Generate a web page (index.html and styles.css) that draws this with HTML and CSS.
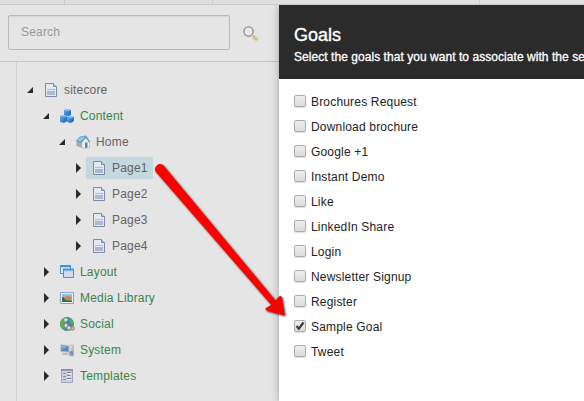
FILE: index.html
```html
<!DOCTYPE html>
<html lang="en">
<head>
<meta charset="utf-8">
<title>Goals</title>
<link rel="stylesheet" href="styles.css">
</head>
<body>
<svg class="defs" width="0" height="0" aria-hidden="true">
  <defs>
    <linearGradient id="blue" x1="0" y1="0" x2="1" y2="1"><stop offset="0" stop-color="#6db3ec"/><stop offset="1" stop-color="#1457b4"/></linearGradient>
    <linearGradient id="grey" x1="0" y1="0" x2="1" y2="1"><stop offset="0" stop-color="#eee"/><stop offset="1" stop-color="#999"/></linearGradient>
    <symbol id="open" viewBox="0 0 8 8"><path d="M7 1v6H1z" fill="#2b2b2b"/></symbol>
    <symbol id="closed" viewBox="0 0 8 10"><path d="M2 0v10l5-5z" fill="#2b2b2b"/></symbol>
    <symbol id="doc" viewBox="0 0 16 16">
      <path d="M2.500 1.500h8l3 3v10h-11z" fill="#e4e8f1" stroke="#7d8aa9"/><path d="M10.500 1.500v3h3" fill="#cbd3e3" stroke="#7d8aa9"/>
      <path d="M4 7.500h8" stroke="#b3bdd4"/><path d="M4 9h8v4H4z" fill="#acb7d2"/>
    </symbol>
    <symbol id="cubes" viewBox="0 0 16 16">
      <path d="M5 2l3-1 4 1v5l-3 1-4-1z" fill="url(#blue)"/><path d="M5 2l4 1 3-1-4-1z" fill="#8bc8f5"/>
      <path d="M1 8l3-1 4 1v5l-3 2-4-1z" fill="url(#blue)"/><path d="M1 8l4 1 3-1-4-1z" fill="#8bc8f5"/>
      <path d="M8 9l3-1 4 1v4l-3 2-4-1z" fill="url(#blue)"/><path d="M8 9l4 1 3-1-4-1z" fill="#8bc8f5"/>
    </symbol>
    <symbol id="house" viewBox="0 0 16 16">
      <path d="M1.500 7l4-2 2 5v4l-6-2z" fill="#a8abad"/><path d="M6.500 8L11 3.500 14.500 8v5.500L9 14.500l-2-1z" fill="#efefed" stroke="#aaa" stroke-width=".6"/>
      <path d="M.8 7L5 2.500l6-1L15.300 8l-1.300.3-3.200-4.300L6.500 9z" fill="#6497bd"/><path d="M2 6.600l3.500-3.500 5-.8L6 7.600z" fill="#93c5e2"/>
      <path d="M10 8.500h2.500v5l-2.500.4z" fill="#4c87bb"/>
    </symbol>
    <symbol id="windows" viewBox="0 0 16 16">
      <path d="M1.500 1.500h10v8h-10z" fill="#e4edf5" stroke="#3c96d8"/><path d="M1 2h11" stroke="#3c96d8" stroke-width="2"/><path d="M2 3.500h9" stroke="#b9daf2"/>
      <path d="M4.500 5.500h10v8h-10z" fill="#d2daec" stroke="#3c96d8"/><path d="M4 5.500h11" stroke="#3c96d8" stroke-width="2"/><path d="M5 7.500h9" stroke="#b9daf2"/>
    </symbol>
    <symbol id="photo" viewBox="0 0 16 16">
      <path d="M1.500 2.500h13v11h-13z" fill="#e9eef4" stroke="#8ea5c5"/><path d="M3 4h10v4H3z" fill="#92bee0"/><path d="M3 7h10v5H3z" fill="#8fae6a"/>
      <path d="M3 7q2 0 3 2t3 1l4 1v1H3z" fill="#39694a"/><ellipse cx="9" cy="7.600" rx="3" ry="1.700" fill="#e77b45"/>
    </symbol>
    <symbol id="globe" viewBox="0 0 16 16">
      <circle cx="8" cy="8" r="7" fill="#3e85c2"/><path d="M3 3l4-2 2 3-3 3-2 1 2 3-1 3-3-3-1-5z" fill="#69a943"/><path d="M10 2l4 3 1 4-3-1-2-3z" fill="#61a44b"/>
      <path d="M5 3q3-2 4 1L6 6z" fill="#c9e7e9"/><g fill="#ddd" stroke="#938e7d" stroke-width="1.100"><circle cx="7" cy="9.500" r="2"/><circle cx="10" cy="12" r="2"/><circle cx="13.500" cy="12.500" r="1.700" fill="#e5bd55"/></g>
    </symbol>
    <symbol id="computer" viewBox="0 0 16 16">
      <path d="M10 3h4.500v11H10z" fill="url(#grey)" stroke="#aaa" stroke-width=".5"/><path d="M1 2l9.500 1v8L1 10z" fill="#c6cbd2"/><path d="M2 3.200l7.500.8v5.800L2 9z" fill="#5c86b7"/>
      <path d="M2 3.200l7.500.8L2 8z" fill="#86a8cd"/><path d="M4 11h4l1 2-6-.5z" fill="#b5b8bc"/><circle cx="12.500" cy="11" r="2" fill="#7893b7"/>
    </symbol>
    <symbol id="form" viewBox="0 0 16 16">
      <path d="M2.500 1.500h11v13h-11z" fill="#cdcfdd" stroke="#a1a4b8"/><path d="M2 2h12" stroke="#84879f" stroke-width="1.500"/>
      <path d="M4 5.500h3M4 8.500h3M4 11.500h3" stroke="#8b8fa8"/><path d="M8 4.500h4M8 7.500h3M8 10.500h4" stroke="#777c98"/><path d="M8 5.500h4M8 8.500h3M8 11.500h4" stroke="#eef0f8"/>
    </symbol>
  </defs>
</svg>
<div class="screen">
  <div class="strip"><i class="cell first"></i><i class="cell second"></i><i class="cell third"></i></div>
  <div class="main">
    <aside class="sidebar">
      <div class="search">
        <div class="field">Search</div>
        <svg class="glass" viewBox="0 0 16 16"><path d="M9.800 9.800l4.400 4.400" stroke="#d9bd82" stroke-width="3.200"/><circle cx="5.500" cy="5.500" r="4.600" fill="#e9e9ea" stroke="#8c8c8c" stroke-width="1.300"/></svg>
      </div>
      <div class="tree">
        <div class="node l0"><svg class="tw"><use href="#open"/></svg><span class="item"><svg><use href="#doc"/></svg><b>sitecore</b></span></div>
        <div class="node l1 green"><svg class="tw"><use href="#open"/></svg><span class="item"><svg><use href="#cubes"/></svg><b>Content</b></span></div>
        <div class="node l2"><svg class="tw"><use href="#open"/></svg><span class="item"><svg><use href="#house"/></svg><b>Home</b></span></div>
        <div class="node l3"><svg class="tw"><use href="#closed"/></svg><span class="item selected"><svg><use href="#doc"/></svg><b>Page1</b></span></div>
        <div class="node l3"><svg class="tw"><use href="#closed"/></svg><span class="item"><svg><use href="#doc"/></svg><b>Page2</b></span></div>
        <div class="node l3"><svg class="tw"><use href="#closed"/></svg><span class="item"><svg><use href="#doc"/></svg><b>Page3</b></span></div>
        <div class="node l3"><svg class="tw"><use href="#closed"/></svg><span class="item"><svg><use href="#doc"/></svg><b>Page4</b></span></div>
        <div class="node l1 green"><svg class="tw"><use href="#closed"/></svg><span class="item"><svg><use href="#windows"/></svg><b>Layout</b></span></div>
        <div class="node l1 green"><svg class="tw"><use href="#closed"/></svg><span class="item"><svg><use href="#photo"/></svg><b>Media Library</b></span></div>
        <div class="node l1 green"><svg class="tw"><use href="#closed"/></svg><span class="item"><svg><use href="#globe"/></svg><b>Social</b></span></div>
        <div class="node l1 green"><svg class="tw"><use href="#closed"/></svg><span class="item"><svg><use href="#computer"/></svg><b>System</b></span></div>
        <div class="node l1 green"><svg class="tw"><use href="#closed"/></svg><span class="item"><svg><use href="#form"/></svg><b>Templates</b></span></div>
      </div>
    </aside>
    <section class="dialog">
      <header><h1>Goals</h1><p>Select the goals that you want to associate with the se</p></header>
      <div class="goals">
        <label><input type="checkbox">Brochures Request</label>
        <label><input type="checkbox">Download brochure</label>
        <label><input type="checkbox">Google +1</label>
        <label><input type="checkbox">Instant Demo</label>
        <label><input type="checkbox">Like</label>
        <label><input type="checkbox">LinkedIn Share</label>
        <label><input type="checkbox">Login</label>
        <label><input type="checkbox">Newsletter Signup</label>
        <label><input type="checkbox">Register</label>
        <label><input type="checkbox" checked><svg class="tick" viewBox="0 0 12 12"><path d="M2.500 6l2.300 2.700L9.500 2.500" fill="none" stroke="#3c3c3c" stroke-width="2.200"/></svg>Sample Goal</label>
        <label><input type="checkbox">Tweet</label>
      </div>
    </section>
  </div>
  <svg class="arrow" viewBox="0 0 584 401"><path d="M156 172a5 5 0 0 1 7.500-6.500L275.500 300.500l3.500-4q2-1.500 3 1L284.800 315.500l-17-4.500q-3-1-2-3l5.500-3z" fill="#fe0000"/></svg>
</div>
</body>
</html>
```
FILE: styles.css
```css
* { box-sizing: border-box; }
body { margin: 0; font: 12px/16px "Liberation Sans", Arial, sans-serif; letter-spacing: .18px; }
.defs { position: absolute; }
.screen { position: relative; width: 584px; height: 401px; overflow: hidden; background: #e5e5e5; display: flex; flex-direction: column; }
.strip { height: 5px; flex: none; display: flex; background: #dfdfdf; border-bottom: 1px solid #cbcbcb; }
.cell { border-right: 1px solid #cbcbcb; }
.first { width: 65px; }
.second { width: 148px; }
.third { width: 267px; }
.main { flex: 1; display: flex; min-height: 0; }
.sidebar { width: 279px; flex: none; display: flex; flex-direction: column; }
.search { height: 57px; flex: none; display: flex; align-items: flex-start; gap: 13px; padding: 10px 0 0 8px; border-bottom: 1px solid #c5c5c5; }
.field { width: 222px; height: 35px; padding: 8px 12px; border: 1px solid #bababa; border-radius: 2px; box-shadow: inset 0 1px 1px #d6d6d6; color: #999; }
.glass { width: 16px; height: 16px; margin-top: 11px; }
.tree { flex: 1; margin-left: 16px; border-left: 1px solid #d2d2d2; padding-top: 15px; }
.node { height: 26px; display: flex; align-items: center; color: #646464; }
.l0 { padding-left: 9px; }
.l1 { padding-left: 25px; }
.l2 { padding-left: 41px; }
.l3 { padding-left: 57px; }
.green { color: #3b8449; }
.tw { width: 8px; height: 10px; margin-right: 4px; flex: none; }
.item { height: 22px; display: flex; align-items: center; gap: 5px; padding: 0 5px; }
.item svg { width: 16px; height: 16px; }
.item b { font-weight: normal; }
.selected { width: 67px; background: #c4d8e0; }
.dialog { flex: 1; min-width: 0; background: #fff; box-shadow: 0 0 8px rgba(0,0,0,.3); clip-path: inset(0 0 0 -12px); }
header { height: 74px; background: #2b2b2b; color: #fff; padding: 19px 0 0 15px; white-space: nowrap; overflow: hidden; }
h1 { margin: 0; font-size: 18px; line-height: 22px; font-weight: normal; letter-spacing: 0; -webkit-text-stroke: .35px #fff; }
p { margin: 3px 0 0; letter-spacing: .05px; -webkit-text-stroke: .3px #fff; }
.goals { padding: 10px 0 0 15px; color: #222; }
label { position: relative; display: flex; align-items: center; gap: 5px; height: 25px; }
input { appearance: none; width: 12px; height: 12px; margin: 0 0 1px; border: 1px solid #acacac; border-radius: 2px; background: linear-gradient(#eee, #dcdcdc); box-shadow: 0 1px 1px #ddd; }
.tick { position: absolute; left: 0; top: 6px; width: 12px; height: 12px; }
.arrow { position: absolute; inset: 0; width: 584px; height: 401px; filter: drop-shadow(1px 1px 1px rgba(0,0,0,.75)); }
```
